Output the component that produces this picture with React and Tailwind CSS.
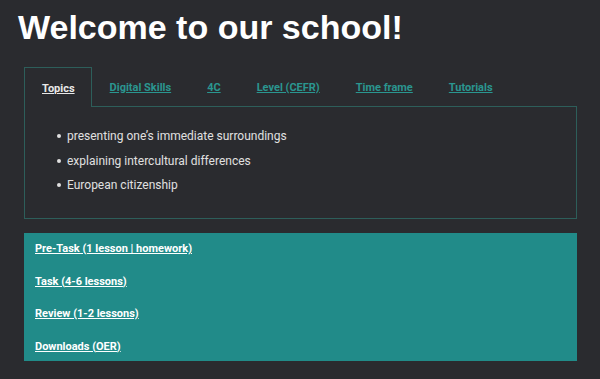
export default function App() {
  const tabs = ["Topics", "Digital Skills", "4C", "Level (CEFR)", "Time frame", "Tutorials"];
  const links = ["Pre-Task (1 lesson | homework)", "Task (4-6 lessons)", "Review (1-2 lessons)", "Downloads (OER)"];
  const items = ["presenting one’s immediate surroundings", "explaining intercultural differences", "European citizenship"];
  return (
    <div className="w-[600px] h-[379px] bg-[#2a2b2f] overflow-hidden" style={{ fontFamily: "Roboto, 'Noto Sans', sans-serif" }}>
      <h1 className="pl-[18px] pt-[9px] text-[34px] leading-[36px] font-bold text-white" style={{ fontFamily: "'Liberation Sans', Arial, sans-serif" }}>
        Welcome to our school!
      </h1>
      <div className="mx-[24px] mt-[22px] w-[553px]">
        <div className="flex h-[39px] relative z-10">
          {tabs.map((t, i) => (
            <div
              key={t}
              className={
                i === 0
                  ? "flex items-center pt-[3px] pl-[17px] pr-[16px] border border-b-0 border-[#2d5e5a] bg-[#2a2b2f] h-[40px]"
                  : "flex items-center pt-[3px] px-[18px] h-[39px]"
              }
            >
              <span className={i === 0 ? "text-[11px] font-bold underline text-[#e8e8e8]" : "text-[11px] font-bold underline text-[#2a9690]"}>
                {t}
              </span>
            </div>
          ))}
        </div>
        <div className="border border-[#2d5e5a] h-[113px] pt-[21px] pl-[32px]">
          <div className="flex flex-col gap-[8.5px] text-[12px] text-[#e0e0e0] leading-[16px]">
            {items.map((it) => (
              <div key={it} className="flex items-center">
                <span className="w-[4px] h-[4px] rounded-full bg-[#e0e0e0] mr-[6px]"></span>
                <span>{it}</span>
              </div>
            ))}
          </div>
        </div>
        <div className="mt-[14px] h-[128px] bg-[#218b89] px-[11px] pt-[8px] flex flex-col gap-[16.5px]">
          {links.map((l) => (
            <div key={l} className="text-[11px] leading-[16px] font-bold text-white underline">{l}</div>
          ))}
        </div>
      </div>
    </div>
  );
}
